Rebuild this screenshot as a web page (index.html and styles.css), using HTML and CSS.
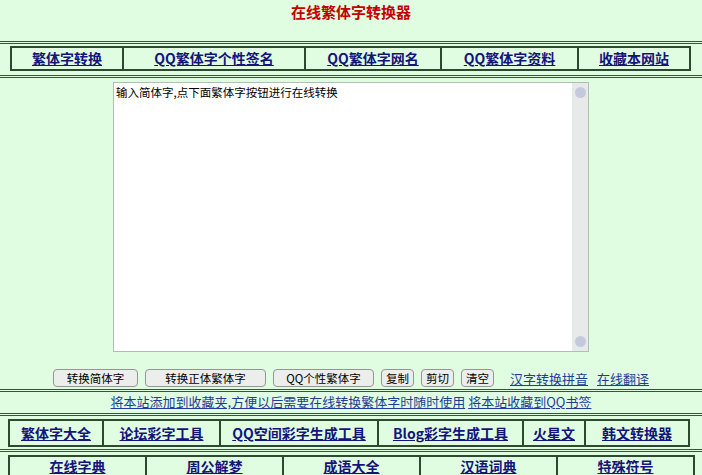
FILE: index.html
```html
<!DOCTYPE html>
<html lang="zh-CN">
<head>
  <meta charset="UTF-8">
  <meta name="viewport" content="width=device-width, initial-scale=1.0">
  <title>在线繁体字转换器</title>
  <link rel="stylesheet" href="styles.css">
</head>
<body>

  <h1 class="title">在线繁体字转换器</h1>
  <div class="rule"></div>

  <!-- 顶部导航 -->
  <div class="nav nav-top">
    <a href="#">繁体字转换</a>
    <a href="#">QQ繁体字个性签名</a>
    <a href="#">QQ繁体字网名</a>
    <a href="#">QQ繁体字资料</a>
    <a href="#">收藏本网站</a>
  </div>
  <div class="rule rule-gap"></div>

  <!-- 输入框 -->
  <div class="editor">
    <textarea class="editor-text" id="content">输入简体字,点下面繁体字按钮进行在线转换</textarea>
    <div class="scrollbar">
      <span class="scroll-btn"></span>
      <span class="scroll-btn"></span>
    </div>
  </div>

  <!-- 按钮 -->
  <div class="tools">
    <button class="btn btn-m">转换简体字</button>
    <button class="btn btn-l">转换正体繁体字</button>
    <button class="btn btn-qq">QQ个性繁体字</button>
    <button class="btn btn-s">复制</button>
    <button class="btn btn-s">剪切</button>
    <button class="btn btn-s">清空</button>
    <a class="tool-link first" href="#">汉字转换拼音</a>
    <a class="tool-link" href="#">在线翻译</a>
  </div>
  <div class="rule"></div>

  <div class="tip">
    <a href="#">将本站添加到收藏夹,方便以后需要在线转换繁体字时随时使用</a>
    <a href="#">将本站收藏到QQ书签</a>
  </div>
  <div class="rule"></div>

  <!-- 底部导航 -->
  <div class="nav nav-mid">
    <a href="#">繁体字大全</a>
    <a href="#">论坛彩字工具</a>
    <a href="#">QQ空间彩字生成工具</a>
    <a href="#">Blog彩字生成工具</a>
    <a href="#">火星文</a>
    <a href="#">韩文转换器</a>
  </div>
  <div class="rule rule-low"></div>

  <div class="nav nav-bottom">
    <a href="#">在线字典</a>
    <a href="#">周公解梦</a>
    <a href="#">成语大全</a>
    <a href="#">汉语词典</a>
    <a href="#">特殊符号</a>
  </div>

</body>
</html>
```

FILE: styles.css
```css
body {
  margin: 0;
  background-color: #e0fde2;
  font-family: "Noto Sans CJK SC", sans-serif;
  color: #000;
}
.title {
  margin: 0;
  height: 41px;
  box-sizing: border-box;
  padding-top: 3px;
  text-align: center;
  font-size: 15px;
  line-height: 18px;
  font-weight: bold;
  color: #c40000;
}
.rule {
  border-top: 3px double #355535;
}
.rule-gap {
  margin-top: 4px;
}
.rule-low {
  margin-top: 2px;
}

/* 导航表格 */
.nav {
  display: grid;
  border: 1px solid #2e4a2e;
  box-sizing: border-box;
}
.nav a {
  border: 1px solid #2e4a2e;
  box-sizing: border-box;
  text-align: center;
  font-size: 14px;
  font-weight: bold;
  color: #14147a;
  text-decoration: underline;
  white-space: nowrap;
  overflow: hidden;
}
.nav-top {
  margin: 2px 0 0 10px;
  width: 681px;
  grid-template-columns: 112px 182px 136px 137px 112px;
}
.nav-top a {
  height: 23px;
  line-height: 21px;
}
.nav-mid {
  margin: 3px 0 0 8px;
  width: 682px;
  grid-template-columns: 94px 117px 158px 145px 62px 104px;
}
.nav-mid a {
  height: 26px;
  line-height: 24px;
}
.nav-bottom {
  margin: 3px 0 0 8px;
  width: 687px;
  grid-template-columns: repeat(5, 1fr);
}
.nav-bottom a {
  height: 26px;
  line-height: 19px;
}

/* 输入框 */
.editor {
  display: flex;
  margin: 4px 0 0 113px;
  width: 476px;
  height: 270px;
  box-sizing: border-box;
  border: 1px solid #b3bcb5;
  background: #fff;
}
.editor-text {
  flex: 1;
  padding: 2px 2px;
  border: none;
  background: transparent;
  font-family: "Noto Sans CJK SC", sans-serif;
  font-size: 11.5px;
  line-height: 15px;
  resize: none;
  overflow: hidden;
  outline: none;
}
.scrollbar {
  width: 16px;
  display: flex;
  flex-direction: column;
  justify-content: space-between;
  align-items: center;
  padding: 4px 0;
  background: #e6ebea;
}
.scroll-btn {
  width: 11px;
  height: 11px;
  border-radius: 50%;
  background: #c4cadc;
}

/* 按钮行 */
.tools {
  display: flex;
  align-items: center;
  gap: 7px;
  height: 18px;
  margin: 17px 0 2px 53px;
}
.btn {
  height: 18px;
  box-sizing: border-box;
  padding: 0;
  border: 1px solid #959595;
  border-radius: 4px;
  background: #eceeec;
  font-family: "Noto Sans CJK SC", sans-serif;
  font-size: 11.5px;
  line-height: 14px;
  color: #000;
}
.btn-m { width: 85px; }
.btn-l { width: 121px; }
.btn-qq { width: 101px; }
.btn-s { width: 33px; }
.tool-link {
  font-size: 13px;
  color: #1f3c98;
  text-decoration: underline;
  margin-left: 2px;
}
.tool-link.first {
  margin-left: 9px;
}

.tip {
  height: 21px;
  line-height: 20px;
  text-align: center;
  font-size: 13px;
}
.tip a {
  color: #1f3c98;
  text-decoration: underline;
}
```
